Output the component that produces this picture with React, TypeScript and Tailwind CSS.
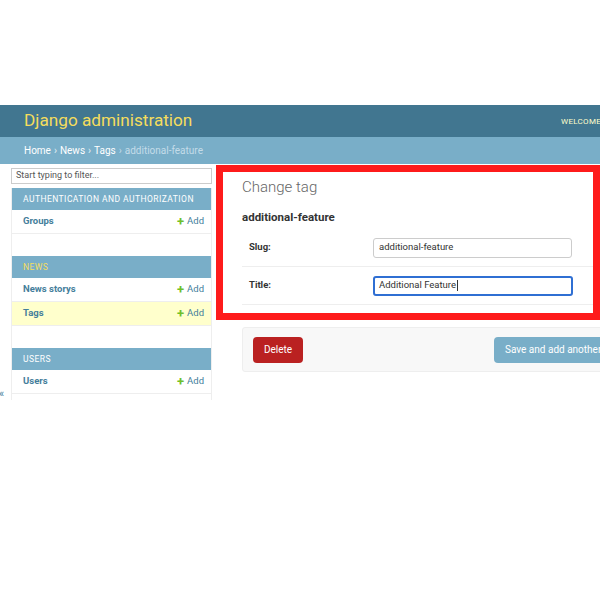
import React from "react";

const font = { fontFamily: "Roboto, 'Liberation Sans', sans-serif" };

function Caption({ text, active }: { text: string; active?: boolean }) {
  return (
    <div
      className={`h-[22px] bg-[#79aec8] flex items-center pl-[11px] text-[8.5px] tracking-[0.45px] uppercase ${
        active ? "text-[#f5dd5d]" : "text-white"
      }`}
    >
      {text}
    </div>
  );
}

function Row({ name, active }: { name: string; active?: boolean }) {
  return (
    <div
      className={`h-[24px] flex items-center justify-between pl-[11px] pr-[7px] border-b border-[#eeeeee] ${
        active ? "bg-[#ffffcc]" : "bg-white"
      }`}
    >
      <span className="text-[9.5px] font-bold text-[#447e9b]">{name}</span>
      <span className="text-[9.5px] text-[#447e9b] flex items-center gap-[3px]">
        <span className="text-[#70bf2b] font-bold text-[13px] leading-none">+</span>
        Add
      </span>
    </div>
  );
}

export default function App() {
  return (
    <div className="relative w-[600px] h-[600px] overflow-hidden bg-white" style={font}>
      <div className="h-[105px]" />
      {/* Header */}
      <div className="h-[32px] bg-[#417690] flex items-center whitespace-nowrap">
        <div className="w-[561px] shrink-0 pl-[24px] text-[17.2px] text-[#f5dd5d] leading-none">
          Django administration
        </div>
        <div className="shrink-0 text-[8px] tracking-[0.3px] text-[#ffffcc] uppercase pt-[1px]">
          Welcome, admin. View site / Change password / Log out
        </div>
      </div>
      {/* Breadcrumbs */}
      <div className="h-[27px] bg-[#79aec8] flex items-center pl-[24px] text-[10px] whitespace-nowrap">
        <span className="text-white">Home</span>
        <span className="text-[#e6f0f5] mx-[3px]">›</span>
        <span className="text-white">News</span>
        <span className="text-[#e6f0f5] mx-[3px]">›</span>
        <span className="text-white">Tags</span>
        <span className="text-[#c4dce8] mx-[3px]">›</span>
        <span className="text-[#c4dce8]">additional-feature</span>
      </div>
      {/* Body */}
      <div className="flex">
        <div className="w-[11px] shrink-0 flex flex-col justify-end pb-[1px]">
          <span className="text-[11px] leading-none text-[#447e9b] -ml-[1px]">«</span>
        </div>
        <div className="w-[201px] shrink-0 pt-[4px]">
          <div className="h-[16px] border border-[#cccccc] flex items-center pl-[4px] text-[9px] text-[#555555]">
            Start typing to filter...
          </div>
          <div className="mt-[4px] border-x border-[#eeeeee] pb-[6px]">
            <Caption text="Authentication and Authorization" />
            <Row name="Groups" />
            <div className="h-[22px]" />
            <Caption text="News" active />
            <Row name="News storys" />
            <Row name="Tags" active />
            <div className="h-[22px]" />
            <Caption text="Users" />
            <Row name="Users" />
          </div>
        </div>
        {/* Main */}
        <div className="ml-[30px] w-[420px] shrink-0 pt-[13px]">
          <h1 className="text-[15px] leading-[20px] font-light text-[#666666]">Change tag</h1>
          <h2 className="mt-[13px] text-[11.5px] leading-[14px] font-bold text-[#333333]">additional-feature</h2>
          <div className="mt-[5px]">
            <div className="h-[38px] flex items-center border-b border-[#eeeeee] pl-[7px]">
              <span className="w-[124px] text-[9.5px] font-bold text-[#333333]">Slug:</span>
              <div className="w-[199px] h-[20px] border border-[#cccccc] rounded-[3px] flex items-center pl-[5px] text-[9.5px] text-[#333333]">
                additional-feature
              </div>
            </div>
            <div className="h-[38px] flex items-center border-b border-[#eeeeee] pl-[7px]">
              <span className="w-[124px] text-[9.5px] font-bold text-[#333333]">Title:</span>
              <div className="w-[200px] h-[20px] border-2 border-[#2f6fd3] rounded-[3px] flex items-center pl-[4px] text-[9.5px] text-[#333333]">
                Additional Feature
                <span className="w-px h-[11px] bg-[#333333] ml-px" />
              </div>
            </div>
          </div>
          <div className="mt-[22px] h-[45px] bg-[#f8f8f8] border border-[#eeeeee] rounded-[3px] flex items-center pl-[10px] whitespace-nowrap">
            <div className="w-[50px] h-[26px] bg-[#ba2121] rounded-[4px] flex items-center justify-center text-[10px] text-white">
              Delete
            </div>
            <div className="ml-[191px] h-[26px] bg-[#79aec8] rounded-[4px] flex items-center px-[11px] text-[10px] text-white">
              Save and add another
            </div>
          </div>
        </div>
      </div>
      {/* Annotation overlay */}
      <div className="absolute left-[216px] top-[165px] w-[384px] h-[155px] border-[7px] border-[#fe1b1b] pointer-events-none" />
    </div>
  );
}
